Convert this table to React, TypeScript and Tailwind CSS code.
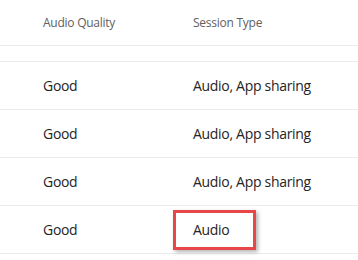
export default function App() {
  const rows = ["Audio, App sharing", "Audio, App sharing", "Audio, App sharing", "Audio"];
  return (
    <div className="w-[358px] h-[260px] bg-white overflow-hidden relative" style={{ fontFamily: '"Open Sans", "Noto Sans", sans-serif' }}>
      <div className="h-[45px] flex items-center text-[12px] tracking-[-0.25px] text-[#616161]">
        <div className="w-[150px] pl-[43px]">Audio Quality</div>
        <div className="pl-[43px]">Session Type</div>
      </div>
      <div className="h-px bg-[#ebebeb]" />
      <div className="h-[15px]" />
      <div className="h-px bg-[#ebebeb]" />
      {rows.map((r, i) => (
        <div key={i}>
          <div className="h-[47px] flex items-center text-[14px] tracking-[-0.3px] text-[#242424]">
            <div className="w-[150px] pl-[43px]">Good</div>
            <div className="pl-[43px]">{r}</div>
          </div>
          <div className="h-px bg-[#ebebeb]" />
        </div>
      ))}
      <div className="absolute left-[173px] top-[210px] w-[83px] h-[40px] border-[3px] border-[#e8474a] shadow-[2px_2px_4px_rgba(0,0,0,0.3)]" />
    </div>
  );
}
